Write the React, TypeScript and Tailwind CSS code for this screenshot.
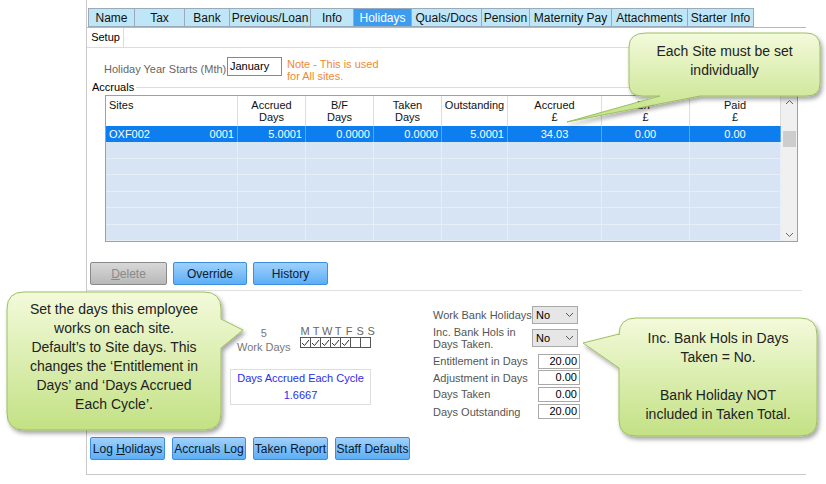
import React from "react";

const tabs = [
  ["Name", 47], ["Tax", 51], ["Bank", 46], ["Previous/Loan", 82], ["Info", 44], ["Holidays", 59],
  ["Quals/Docs", 71], ["Pension", 49], ["Maternity Pay", 83], ["Attachments", 77], ["Starter Info", 67],
] as const;

const cols: [string, string, number][] = [
  ["Sites", "", 132], ["Accrued", "Days", 68], ["B/F", "Days", 68], ["Taken", "Days", 68],
  ["Outstanding", "", 66], ["Accrued", "£", 94], ["B/F", "£", 88], ["Paid", "£", 91],
];

function Btn({ children, w, disabled }: { children: React.ReactNode; w: number; disabled?: boolean }) {
  return (
    <div
      style={{ width: w }}
      className={`h-[23px] whitespace-nowrap flex items-center justify-center rounded-[2px] border text-[12px] ${
        disabled
          ? "border-[#8a8a8a] bg-gradient-to-b from-[#d8d8d8] to-[#b8b8b8] text-[#8a8a8a]"
          : "border-[#3c8ee0] bg-gradient-to-b from-[#9fd0fb] to-[#5aaef5] text-[#0a1a30]"
      }`}
    >
      {children}
    </div>
  );
}

function Sel() {
  return (
    <div className="w-[46px] h-[18px] border border-[#a9a9a9] bg-[#e6e6e6] flex items-center justify-between px-[3px] text-[11px] text-black">
      <span>No</span>
      <svg width="9" height="6" viewBox="0 0 9 6"><path d="M1 1l3.5 3.5L8 1" fill="none" stroke="#555" /></svg>
    </div>
  );
}

function Num({ v }: { v: string }) {
  return <div className="w-[42px] h-[15px] border border-[#a9a9a9] bg-white text-right pr-[2px] text-[11px] leading-[13px] text-black">{v}</div>;
}

export default function App() {
  const font = { fontFamily: "'Liberation Sans', Arial, sans-serif" };
  return (
    <div className="relative w-[826px] h-[484px] bg-white overflow-hidden text-[11px] whitespace-nowrap" style={font}>
      <div className="ml-[86px] w-[720px] h-[475px] border-l border-[#c8c8c8] border-b relative">
        {/* tabs */}
        <div className="flex pt-[8px] pl-[2px] border-b border-[#b8b8b8] h-[28px]">
          {tabs.map(([t, w]) => (
            <div
              key={t}
              style={{ width: w }}
              className={`h-[19px] border border-[#9ab] -ml-px flex items-center justify-center text-[12px] ${
                t === "Holidays" ? "bg-[#3d9cf0] text-white border-[#2a7ccf]" : "bg-[#bfe6f7] text-[#111]"
              }`}
            >
              {t}
            </div>
          ))}
        </div>
        {/* subtab */}
        <div className="flex h-[20px] border-b border-[#dcdcdc]">
          <div className="ml-[1px] w-[36px] border-r border-[#dcdcdc] flex items-center justify-center text-[11px] text-black">Setup</div>
        </div>
        {/* holiday year */}
        <div className="flex items-start mt-[9px] ml-[17px] text-[11px] h-[25px]">
          <div className="mt-[4px] text-[#666] w-[123px]">Holiday Year Starts (Mth)</div>
          <div className="w-[55px] h-[19px] border border-[#888] px-[2px] flex items-center text-black">January</div>
          <div className="ml-[5px] text-[#f08a30] leading-[12px] mt-[1px]">Note - This is used<br />for All sites.</div>
        </div>
        {/* accruals */}
        <div className="flex items-center mt-[-1px] h-[12px]">
          <span className="ml-[5px] text-black">Accruals</span>
          <div className="flex-1 h-px bg-[#dcdcdc] ml-[2px]" />
        </div>
        <div className="ml-[18px] mt-[2px] w-[693px] h-[147px] border border-[#a0a0a0] flex">
          <div className="flex-1 flex flex-col">
            <div className="flex h-[30px] bg-white">
              {cols.map(([a, b, w], i) => (
                <div
                  key={i}
                  style={{ width: w }}
                  className={`border-r border-[#ddd] leading-[12px] pt-[3px] text-[#111] ${i === 0 ? "pl-[3px]" : "text-center"}`}
                >
                  {a}
                  <br />
                  {b}
                </div>
              ))}
            </div>
            <div className="flex h-[16px] bg-[#0d7ef0] text-white">
              {["", "5.0001", "0.0000", "0.0000", "5.0001", "34.03", "0.00", "0.00"].map((v, i) => (
                <div
                  key={i}
                  style={{ width: cols[i][2] }}
                  className={`border-r border-[#5aa6f5] flex items-center ${i === 0 ? "justify-between px-[3px]" : i < 5 ? "justify-end pr-[3px]" : "justify-center"}`}
                >
                  {i === 0 ? (<><span>OXF002</span><span>0001</span></>) : v}
                </div>
              ))}
            </div>
            {[0, 1, 2, 3, 4, 5].map((r) => (
              <div key={r} className="flex h-[16.5px] bg-[#d6e4f3] border-b border-[#e6eef8]">
                {cols.map((c, i) => (
                  <div key={i} style={{ width: c[2] }} className="border-r border-[#e6eef8]" />
                ))}
              </div>
            ))}
          </div>
          <div className="w-[17px] bg-[#f0f0f0] flex flex-col items-center justify-between py-[3px]">
            <svg width="9" height="6" viewBox="0 0 9 6"><path d="M1 5l3.5-3.5L8 5" fill="none" stroke="#666" /></svg>
            <div className="w-[13px] h-[16px] bg-[#cdcdcd] -mt-[60px]" />
            <svg width="9" height="6" viewBox="0 0 9 6"><path d="M1 1l3.5 3.5L8 1" fill="none" stroke="#666" /></svg>
          </div>
        </div>
        <div className="flex gap-[6px] ml-[3px] mt-[20px]">
          <Btn w={77} disabled><span><u>D</u>elete</span></Btn>
          <Btn w={74}>Override</Btn>
          <Btn w={75}>History</Btn>
        </div>
        <div className="h-px bg-[#e0e0e0] mt-[5px] mr-[4px]" />
        {/* lower */}
        <div className="flex mt-[15px] h-[131px]">
          <div className="ml-[150px] w-[160px] pt-[20px]">
            <div className="flex items-start">
              <div className="text-[#777] text-center leading-[14px]">5<br />Work Days</div>
              <div className="ml-[9px]">
                <div className="flex text-[#666] text-[11px] leading-[10px]">
                  {["M", "T", "W", "T", "F", "S", "S"].map((d, i) => (
                    <span key={i} className="w-[11px] text-center">{d}</span>
                  ))}
                </div>
                <div className="flex mt-[1px]">
                  {[1, 1, 1, 1, 1, 0, 0].map((c, i) => (
                    <div key={i} className="w-[11px] h-[11px] border border-[#555] -ml-px first:ml-0 flex items-center justify-center">
                      {c ? <svg width="9" height="8" viewBox="0 0 9 8"><path d="M1 4l2.5 2.5L8 1" fill="none" stroke="#333" /></svg> : null}
                    </div>
                  ))}
                </div>
              </div>
            </div>
            <div className="-ml-[7px] mt-[15px] w-[141px] h-[36px] border border-[#ddd] text-[#2b2bf0] text-center leading-[17px]">
              Days Accrued Each Cycle<br />1.6667
            </div>
          </div>
          <div className="ml-[36px] text-[#555] text-[11px]">
            <div className="flex items-center h-[18px]"><span className="w-[99px]">Work Bank Holidays</span><Sel /></div>
            <div className="flex items-center h-[26px] mt-[1px]"><span className="w-[99px] leading-[12px]">Inc. Bank Hols in<br />Days Taken.</span><Sel /></div>
            {[["Entitlement in Days", "20.00"], ["Adjustment in Days", "0.00"], ["Days Taken", "0.00"], ["Days Outstanding", "20.00"]].map(([l, v], i) => (
              <div key={l} className={`flex items-center h-[16.5px] ${i === 0 ? "mt-[2px]" : ""} ${i === 3 ? "mt-[1px]" : ""}`}>
                <span className="w-[105px]">{l}</span><Num v={v} />
              </div>
            ))}
          </div>
        </div>
        <div className="flex gap-[7px] ml-[3px]">
          <Btn w={75}><span>Log <u>H</u>olidays</span></Btn>
          <Btn w={74}>Accruals Log</Btn>
          <Btn w={75}>Taken Report</Btn>
          <Btn w={75}>Staff Defaults</Btn>
        </div>
      </div>

      {/* callouts overlay */}
      <svg className="absolute left-0 top-0 pointer-events-none" width="826" height="484">
        <defs>
          <linearGradient id="g" x1="0" y1="0" x2="0" y2="1">
            <stop offset="0" stopColor="#f3fadb" />
            <stop offset="1" stopColor="#c3e184" />
          </linearGradient>
          <filter id="s" x="-10%" y="-10%" width="130%" height="130%">
            <feDropShadow dx="2" dy="3" stdDeviation="2" floodColor="#000" floodOpacity="0.35" />
          </filter>
        </defs>
        <g fill="url(#g)" stroke="#9cc060" strokeWidth="1" filter="url(#s)">
          <path d="M646 33 H806 Q820 33 820 47 V84 Q820 96 806 96 H700 L567 122 L660 96 H642 Q629 96 629 84 V47 Q629 33 646 33 Z" />
          <path d="M24 292 H204 Q221 292 221 309 V319 L243 330 L221 348 V413 Q221 430 204 430 H24 Q7 430 7 413 V309 Q7 292 24 292 Z" />
          <path d="M636 318 H800 Q817 318 817 335 V420 Q817 436 800 436 H636 Q619 436 619 420 V368 L583 343 L619 334 V335 Q619 318 636 318 Z" />
        </g>
      </svg>
      <div className="absolute left-[629px] top-[42px] w-[191px] text-center text-[14px] leading-[19px] text-[#222]">
        Each Site must be set<br />individually
      </div>
      <div className="absolute left-[7px] top-[300px] w-[214px] text-center text-[14px] leading-[19px] text-[#222]">
        Set the days this employee<br />works on each site.<br />Default’s to Site days. This<br />changes the ‘Entitlement in<br />Days’ and ‘Days Accrued<br />Each Cycle’.
      </div>
      <div className="absolute left-[619px] top-[329px] w-[198px] text-center text-[14px] leading-[19px] text-[#222]">
        Inc. Bank Hols in Days<br />Taken = No.<br /><br />Bank Holiday NOT<br />included in Taken Total.
      </div>
    </div>
  );
}
